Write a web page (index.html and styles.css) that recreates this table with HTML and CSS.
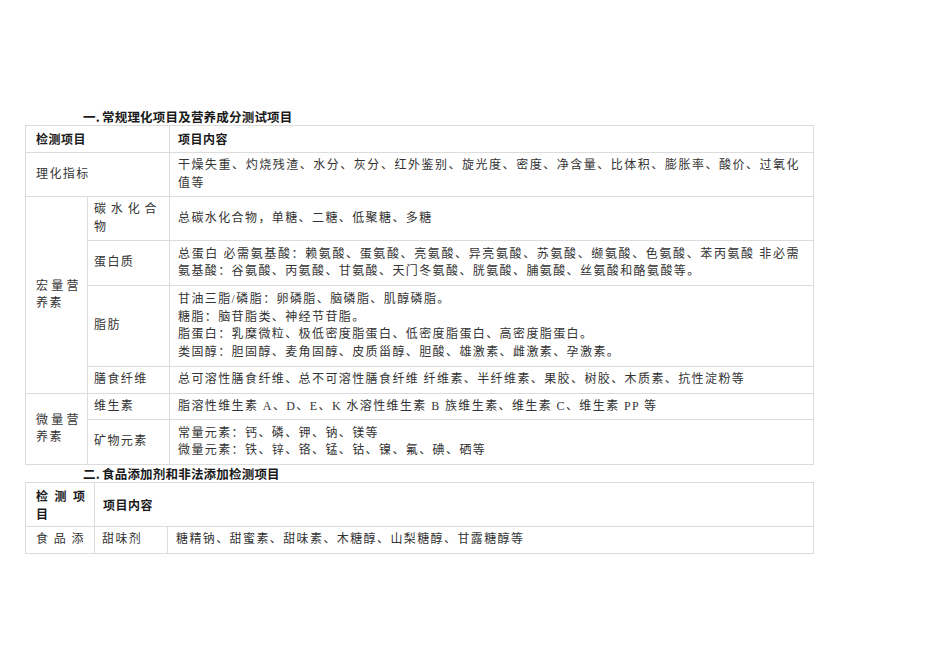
FILE: index.html
```html
<!DOCTYPE html>
<html lang="zh-CN">
<head>
<meta charset="utf-8">
<title>检测项目</title>
<link rel="stylesheet" href="styles.css">
</head>
<body>
<div class="page">
  <h2 class="section-title">一. 常规理化项目及营养成分测试项目</h2>
  <table class="grid grid-one">
    <colgroup><col class="c1"><col class="c2"><col class="c3"></colgroup>
    <tr class="r-head">
      <th colspan="2" class="th-left">检测项目</th>
      <th class="th-main">项目内容</th>
    </tr>
    <tr class="r-44">
      <td colspan="2" class="cat">理化指标</td>
      <td class="content">干燥失重、灼烧残渣、水分、灰分、红外鉴别、旋光度、密度、净含量、比体积、膨胀率、酸价、过氧化值等</td>
    </tr>
    <tr class="r-44">
      <td rowspan="4" class="cat narrow">宏量营养素</td>
      <td class="sub">碳水化合物</td>
      <td class="content">总碳水化合物，单糖、二糖、低聚糖、多糖</td>
    </tr>
    <tr class="r-45">
      <td class="sub">蛋白质</td>
      <td class="content">总蛋白 必需氨基酸：赖氨酸、蛋氨酸、亮氨酸、异亮氨酸、苏氨酸、缬氨酸、色氨酸、苯丙氨酸 非必需氨基酸：谷氨酸、丙氨酸、甘氨酸、天门冬氨酸、胱氨酸、脯氨酸、丝氨酸和酪氨酸等。</td>
    </tr>
    <tr class="r-81">
      <td class="sub">脂肪</td>
      <td class="content lines">甘油三脂/磷脂：卵磷脂、脑磷脂、肌醇磷脂。<br>糖脂：脑苷脂类、神经节苷脂。<br>脂蛋白：乳糜微粒、极低密度脂蛋白、低密度脂蛋白、高密度脂蛋白。<br>类固醇：胆固醇、麦角固醇、皮质甾醇、胆酸、雄激素、雌激素、孕激素。</td>
    </tr>
    <tr class="r-27">
      <td class="sub">膳食纤维</td>
      <td class="content">总可溶性膳食纤维、总不可溶性膳食纤维 纤维素、半纤维素、果胶、树胶、木质素、抗性淀粉等</td>
    </tr>
    <tr class="r-26">
      <td rowspan="2" class="cat narrow">微量营养素</td>
      <td class="sub">维生素</td>
      <td class="content">脂溶性维生素 A、D、E、K 水溶性维生素 B 族维生素、维生素 C、维生素 PP 等</td>
    </tr>
    <tr class="r-45">
      <td class="sub">矿物元素</td>
      <td class="content lines">常量元素：钙、磷、钾、钠、镁等<br>微量元素：铁、锌、铬、锰、钴、镍、氟、碘、硒等</td>
    </tr>
  </table>

  <h2 class="section-title second">二. 食品添加剂和非法添加检测项目</h2>
  <table class="grid grid-two">
    <colgroup><col class="d1"><col class="d2"><col class="d3"></colgroup>
    <tr class="r-44">
      <th class="th-left th-wrap">检测项目</th>
      <th colspan="2" class="th-main">项目内容</th>
    </tr>
    <tr class="r-27">
      <td class="cat cut">食品添</td>
      <td class="sub sub2">甜味剂</td>
      <td class="content">糖精钠、甜蜜素、甜味素、木糖醇、山梨糖醇、甘露糖醇等</td>
    </tr>
  </table>
</div>
</body>
</html>
```

FILE: styles.css
```css
html, body {
  margin: 0;
  padding: 0;
  background: #ffffff;
}

.page {
  padding: 109px 0 0 25px;
  width: 788px;
  font-family: "Liberation Serif", "Noto Sans CJK SC", serif;
  color: #333333;
}

.section-title {
  margin: 0;
  padding-left: 58px;
  font-family: "Noto Sans CJK SC", sans-serif;
  font-size: 12.5px;
  font-weight: 700;
  line-height: 16px;
  color: #1a1a1a;
  letter-spacing: 0.2px;
  word-spacing: -1px;
}

.section-title.second {
  line-height: 17px;
}

.grid {
  width: 788px;
  border-collapse: collapse;
  table-layout: fixed;
  font-size: 12px;
  line-height: 17.5px;
}

.grid th,
.grid td {
  border: 1px solid #dcdcdc;
  vertical-align: middle;
}

.c1 { width: 62px; }
.c2 { width: 82px; }
.c3 { width: 644px; }

.d1 { width: 69px; }
.d2 { width: 73px; }
.d3 { width: 646px; }

.r-head { height: 27px; }
.r-44 { height: 44px; }
.r-45 { height: 45px; }
.r-81 { height: 81px; }
.r-27 { height: 27px; }
.r-26 { height: 26px; }

.grid th {
  font-family: "Noto Sans CJK SC", sans-serif;
  font-weight: 700;
  font-size: 12px;
  letter-spacing: 0.5px;
  color: #1a1a1a;
  text-align: left;
}

.grid .th-left {
  padding: 0 8px 0 10px;
}

.grid .th-main {
  padding: 0 8px 0 8px;
}

.grid .th-wrap {
  padding: 0 8px 0 10px;
  letter-spacing: 1px;
  text-align: justify;
}

.grid .cat {
  padding: 0 8px 0 10px;
  letter-spacing: 1.4px;
  text-align: justify;
}

.grid .cat.narrow {
  padding-right: 7px;
}

.grid .cat.cut {
  text-align: justify;
  text-align-last: justify;
  padding-right: 9px;
}

.grid .sub {
  padding: 0 11px 0 6px;
  letter-spacing: 1.4px;
  text-align: justify;
}

.grid .sub2 {
  padding-left: 7px;
}

.grid .content {
  padding: 0 13px 0 8px;
  letter-spacing: 1.4px;
  text-align: justify;
}

.grid .content.lines {
  text-align: left;
}
```
